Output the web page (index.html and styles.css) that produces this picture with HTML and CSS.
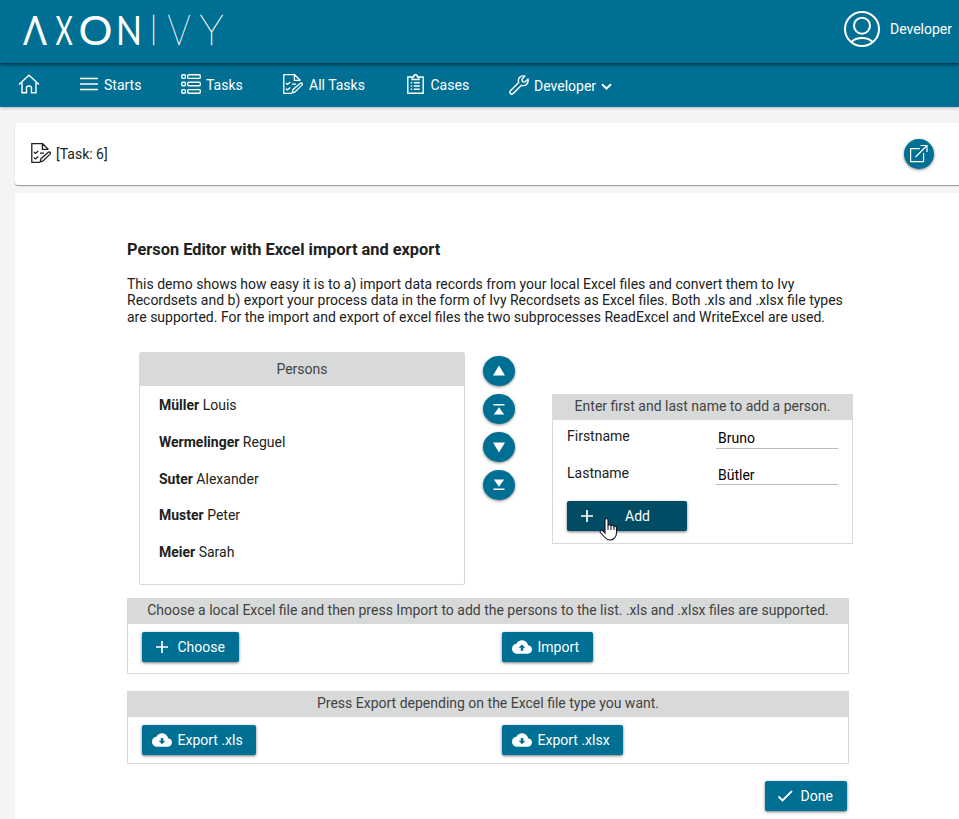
FILE: index.html
```html
<!DOCTYPE html>
<html lang="en">
<head>
<meta charset="utf-8">
<title>Person Editor</title>
<link rel="stylesheet" href="styles.css">
</head>
<body>
<svg class="defs" aria-hidden="true">
  <symbol id="task" viewBox="0 0 20 20"><g fill="none" stroke="currentColor" stroke-width="1.3"><path d="M17 6.8V6L11.6.7H.8v18.6h8M11.4.8v5.5H17M9.2 18.9l.9-3.5 7.5-6.3q.8-.5 1.6.4.5.9-.2 1.6l-7.2 7z"/><path d="m3 9 1.5 1.4L7.3 8M3 14.5l1.5 1.4 2.8-2.5M9 10.2h4"/></g></symbol>
  <symbol id="plus" viewBox="0 0 20 20"><path d="M10 4v12M4 10h12" stroke="currentColor" stroke-width="1.7" fill="none"/></symbol>
  <symbol id="down" viewBox="0 0 24 24"><path fill="currentColor" d="M19.35 10.04C18.67 6.59 15.64 4 12 4 9.11 4 6.6 5.64 5.35 8.04 2.34 8.36 0 10.91 0 14c0 3.31 2.69 6 6 6h13c2.76 0 5-2.24 5-5 0-2.64-2.05-4.78-4.65-4.96zM16 13l-4 4-4-4h2.5V9.500h3V13z"/></symbol>
  <symbol id="up" viewBox="0 0 24 24"><path fill="currentColor" d="M19.35 10.04C18.67 6.59 15.64 4 12 4 9.11 4 6.6 5.64 5.35 8.04 2.34 8.36 0 10.91 0 14c0 3.31 2.69 6 6 6h13c2.76 0 5-2.24 5-5 0-2.64-2.05-4.78-4.65-4.96zM13.5 13v3.5h-3V13H8l4-4 4 4z"/></symbol>
</svg>
<header class="topbar">
  <svg class="logo" width="210" height="63" viewBox="0 0 210 63" fill="#fff" role="img" aria-label="AXON IVY">
    <text x="1" y="45" textLength="24" lengthAdjust="spacingAndGlyphs" class="regular">Λ</text>
    <text transform="translate(33.500 45) scale(.64 1)" class="regular">X</text>
    <text x="56.500" y="45" textLength="34" lengthAdjust="spacingAndGlyphs" class="regular">O</text>
    <text x="94" y="45" textLength="26" lengthAdjust="spacingAndGlyphs" class="regular">N</text>
    <text x="126.500" y="45" class="thin">I</text>
    <text x="145.500" y="45" textLength="23" lengthAdjust="spacingAndGlyphs" class="thin">V</text>
    <text x="177.500" y="45" textLength="24" lengthAdjust="spacingAndGlyphs" class="thin">Y</text>
  </svg>
  <div class="user">
    <svg width="38" height="38" viewBox="0 0 38 38" fill="none" stroke="#fff" stroke-width="2"><circle cx="19" cy="19" r="17"/><circle cx="19" cy="15.700" r="8"/><path d="M8.500 32q3.500-4 10.500-4t10.500 4"/></svg>
    <span>Developer</span>
  </div>
</header>
<nav class="nav">
  <a class="home"><svg width="22" height="20" viewBox="0 0 22 20" fill="none" stroke="currentColor" stroke-width="1.4"><path d="M1 10.500 11 1.200l10 9.300M4 8.500v10.300h4.500v-5q0-1.800 2.500-1.800t2.500 1.800v5H18V8.500"/></svg></a>
  <a class="starts"><svg width="18" height="20" viewBox="0 0 18 20" stroke="currentColor" stroke-width="1.500"><path d="M0 4.500h18M0 10h18M0 15.500h18"/></svg>Starts</a>
  <a class="tasks"><svg width="20" height="20" viewBox="0 0 20 20" fill="none" stroke="currentColor" stroke-width="1.400"><rect x=".8" y=".8" width="3.600" height="3.600" rx="1"/><rect x="6.700" y=".8" width="12.600" height="3.600" rx="1"/><rect x=".8" y="8.200" width="3.600" height="3.600" rx="1"/><rect x="6.700" y="8.200" width="12.600" height="3.600" rx="1"/><rect x=".8" y="15.600" width="3.600" height="3.600" rx="1"/><rect x="6.700" y="15.600" width="12.600" height="3.600" rx="1"/></svg>Tasks</a>
  <a class="all"><svg width="20" height="20"><use href="#task"/></svg>All Tasks</a>
  <a class="cases"><svg width="17" height="20" viewBox="0 0 17 20" fill="none" stroke="currentColor" stroke-width="1.400"><path d="M5 3H.8v16.300h15.400V3H12M5 5.500V3h1.500q0-2.300 2-2.300t2 2.300H12v2.500z"/><path d="M3.800 8.800h1.400M6.800 8.800h6M3.800 12h1.400M6.800 12h6M3.800 15.300h1.400M6.800 15.300h6"/></svg>Cases</a>
  <a class="dev"><svg width="20" height="20" viewBox="0 0 20 20" fill="none" stroke="currentColor" stroke-width="1.400"><path d="M15.800 1.200Q12.500.2 10.500 2.500 8.700 4.600 9.700 7.500L1.400 15.800q-1.100 1.400 0 2.700t2.700.1l8.300-8.300q3.200 1 5.300-1.100 2-2.200 1.200-5.100L16 7l-2.600-.4L13 4z"/></svg><span>Developer</span><svg class="chev" width="11" height="8" viewBox="0 0 11 8" fill="none" stroke="currentColor" stroke-width="2"><path d="m1 1.200 4.500 4.300L10 1.200"/></svg></a>
</nav>
<main>
  <section class="taskbar">
    <svg width="20" height="20"><use href="#task"/></svg><span>[Task: 6]</span>
    <button class="round open"><svg width="20" height="20" viewBox="0 0 20 20" fill="none" stroke="currentColor" stroke-width="1.200"><path d="M11 4.600H1.600v13h13V9M6.500 13 18 1.500M11.500 1.500H18V8"/></svg></button>
  </section>
  <section class="content">
    <h1>Person Editor with Excel import and export</h1>
    <p class="intro">This demo shows how easy it is to a) import data records from your local Excel files and convert them to Ivy<br>Recordsets and b) export your process data in the form of Ivy Recordsets as Excel files. Both .xls and .xlsx file types<br>are supported. For the import and export of excel files the two subprocesses ReadExcel and WriteExcel are used.</p>
    <div class="editor">
      <div class="persons">
        <div class="caption">Persons</div>
        <ul>
          <li><b>Müller</b> Louis</li>
          <li><b>Wermelinger</b> Reguel</li>
          <li><b>Suter</b> Alexander</li>
          <li><b>Muster</b> Peter</li>
          <li><b>Meier</b> Sarah</li>
        </ul>
      </div>
      <div class="order">
        <button class="round"><svg width="12" height="12" viewBox="0 0 12 12"><path d="M0 10.500 6 .5l6 10z"/></svg></button>
        <button class="round"><svg width="12" height="12" viewBox="0 0 12 12"><path d="M.5 1h11v1.600H.5zM.8 11.500 6 4.300l5.200 7.200z"/></svg></button>
        <button class="round"><svg width="12" height="12" viewBox="0 0 12 12"><path d="M0 1.500 6 11.500l6-10z"/></svg></button>
        <button class="round"><svg width="12" height="12" viewBox="0 0 12 12"><path d="M.5 9.500h11v1.600H.5zM.8.500 6 7.700 11.200.500z"/></svg></button>
      </div>
      <div class="panel add">
        <div class="caption">Enter first and last name to add a person.</div>
        <div class="field"><label>Firstname</label><span class="input">Bruno</span></div>
        <div class="field last"><label>Lastname</label><span class="input">Bütler</span></div>
        <button class="btn hover"><svg width="20" height="20"><use href="#plus"/></svg><span>Add</span>
          <svg class="cursor" width="20" height="25" viewBox="0 0 20 25"><path d="M6 16V3.200q0-1.700 1.500-1.700T9 3.200V9q.2-1.200 1.500-1.200 1.400 0 1.500 1.300.3-1 1.500-.8 1.300.1 1.500 1.300.4-.8 1.500-.5 1 .3 1 1.700V16q0 3.500-2.500 5.500-1.500 1.500-4 1.500-3 0-5-2.500l-4.500-5q-.8-1.300.2-2.200 1.500-1 4.300 2.700z" fill="#fff" stroke="#112" stroke-width="1.100"/><path d="M9 8.500V13M12 9v4M15 10v3" stroke="#112" fill="none"/></svg></button>
      </div>
    </div>
    <div class="panel files import">
      <div class="caption">Choose a local Excel file and then press Import to add the persons to the list. .xls and .xlsx files are supported.</div>
      <div class="pair"><button class="btn choose"><svg width="20" height="20"><use href="#plus"/></svg><span>Choose</span></button><button class="btn imp"><svg width="20" height="20"><use href="#up"/></svg><span>Import</span></button></div>
    </div>
    <div class="panel files export">
      <div class="caption">Press Export depending on the Excel file type you want.</div>
      <div class="pair"><button class="btn xls"><svg width="20" height="20"><use href="#down"/></svg><span>Export .xls</span></button><button class="btn xlsx"><svg width="20" height="20"><use href="#down"/></svg><span>Export .xlsx</span></button></div>
    </div>
    <button class="btn done"><svg width="20" height="20" viewBox="0 0 20 20" fill="none" stroke="currentColor" stroke-width="1.800"><path d="m3.500 10.500 4 4 9.500-9.500"/></svg><span>Done</span></button>
  </section>
</main>
</body>
</html>
```
FILE: styles.css
```css
* { box-sizing: border-box; }
body { margin: 0; height: 819px; overflow: hidden; background: #f4f4f4; color: #212121; font: 14px/16.4px Roboto, sans-serif; }
.defs { position: absolute; width: 0; height: 0; }
svg { display: block; flex: none; }
button { font: inherit; color: #fff; background: #006f94; border: 0; padding: 0; cursor: pointer; }

.topbar { height: 63px; padding: 0 7px 0 22px; background: #006f94; color: #fff; display: flex; justify-content: space-between; position: relative; box-shadow: 0 1px 4px rgba(0,0,0,.75); }
.logo { font: 41.5px Lato, sans-serif; overflow: visible; }
.regular { font-weight: 400; }
.thin { font-weight: 100; stroke: #fff; stroke-width: .35px; }
.user { display: flex; align-items: center; gap: 9px; height: 58px; }

.nav { height: 44px; padding-left: 18px; background: #006f94; color: #fff; display: flex; align-items: center; box-shadow: 0 1px 3px rgba(0,0,0,.25); }
.nav a { display: flex; align-items: center; gap: 5px; height: 44px; }
.nav .home { width: 62px; padding-bottom: 2px; }
.nav .starts { width: 101px; gap: 6px; }
.nav .tasks { width: 102px; }
.nav .all { width: 124px; gap: 6px; }
.nav .cases { width: 102px; gap: 6.500px; }
.nav .dev span { margin-top: 2px; }
.nav .chev { margin-top: 4px; }
.nav .tasks svg, .nav .all svg, .nav .cases svg, .nav .starts svg { margin-top: -3px; }

main { padding: 16px 0 0 15px; }
.taskbar { height: 62px; padding: 0 25px 0 16px; background: #fff; border-radius: 3px 0 0 3px; box-shadow: 0 1px 1px rgba(0,0,0,.4); display: flex; align-items: center; gap: 5px; }
.taskbar > svg { margin-top: -3px; }
.round { width: 32px; height: 30px; border-radius: 50%; box-shadow: 0 1px 3px rgba(0,0,0,.5); display: flex; align-items: center; justify-content: center; fill: #fff; }
.open { width: 30px; margin-left: auto; }

.content { margin-top: 8px; height: 626px; padding: 48px 106px 0 112px; background: #fff; border-radius: 3px 0 0 0; }
h1 { margin: 0 0 17px; font-size: 16.38px; line-height: 18px; font-weight: 700; }
.intro { margin: 0 0 27px; line-height: 16.400px; white-space: nowrap; }
.editor { display: flex; height: 233px; margin: 0 -8px 13px 12px; }
.caption { background: #d8dada; color: #424242; text-align: center; white-space: nowrap; }
.persons { width: 326px; border: 1px solid #d8dada; border-radius: 2px; }
.persons .caption { height: 33px; line-height: 33px; }
ul { list-style: none; margin: 0; padding: 1px 0 0 19px; }
li { height: 36.700px; line-height: 36.700px; }
.order { width: 87px; padding: 4px 0 0 18px; display: flex; flex-direction: column; gap: 8px; }
.panel { border: 1px solid #d8dada; }
.panel .caption { height: 25px; line-height: 23px; }
.add { width: 301px; height: 150px; margin-top: 42px; }
.field { display: flex; height: 37px; padding: 8px 14px 0; justify-content: space-between; }
.input { width: 122px; height: 21px; padding: 2px 2px 0; border-bottom: 1px solid #bdbdbd; color: #000; }
.last .input { height: 20px; }
.btn { height: 30px; border-radius: 2px; display: flex; align-items: center; padding: 0 0 0 10px; gap: 5.500px; box-shadow: 0 1px 3px rgba(0,0,0,.55); white-space: nowrap; }
.btn.hover { width: 120px; background: #004c65; margin: 7px 0 0 14px; position: relative; }
.hover span { margin-left: 22.500px; }
.cursor { position: absolute; left: 32px; top: 16px; }
.files { width: 722px; }
.import { height: 76px; margin-bottom: 17px; }
.export { height: 73px; margin-bottom: 17px; }
.pair { display: grid; grid-template-columns: 360px 1fr; padding: 8px 0 0 14px; }
.choose { width: 97px; }
.imp { width: 91px; }
.xls { width: 114px; }
.xlsx { width: 121px; }
.done { width: 82px; margin-left: 638px; }
```
